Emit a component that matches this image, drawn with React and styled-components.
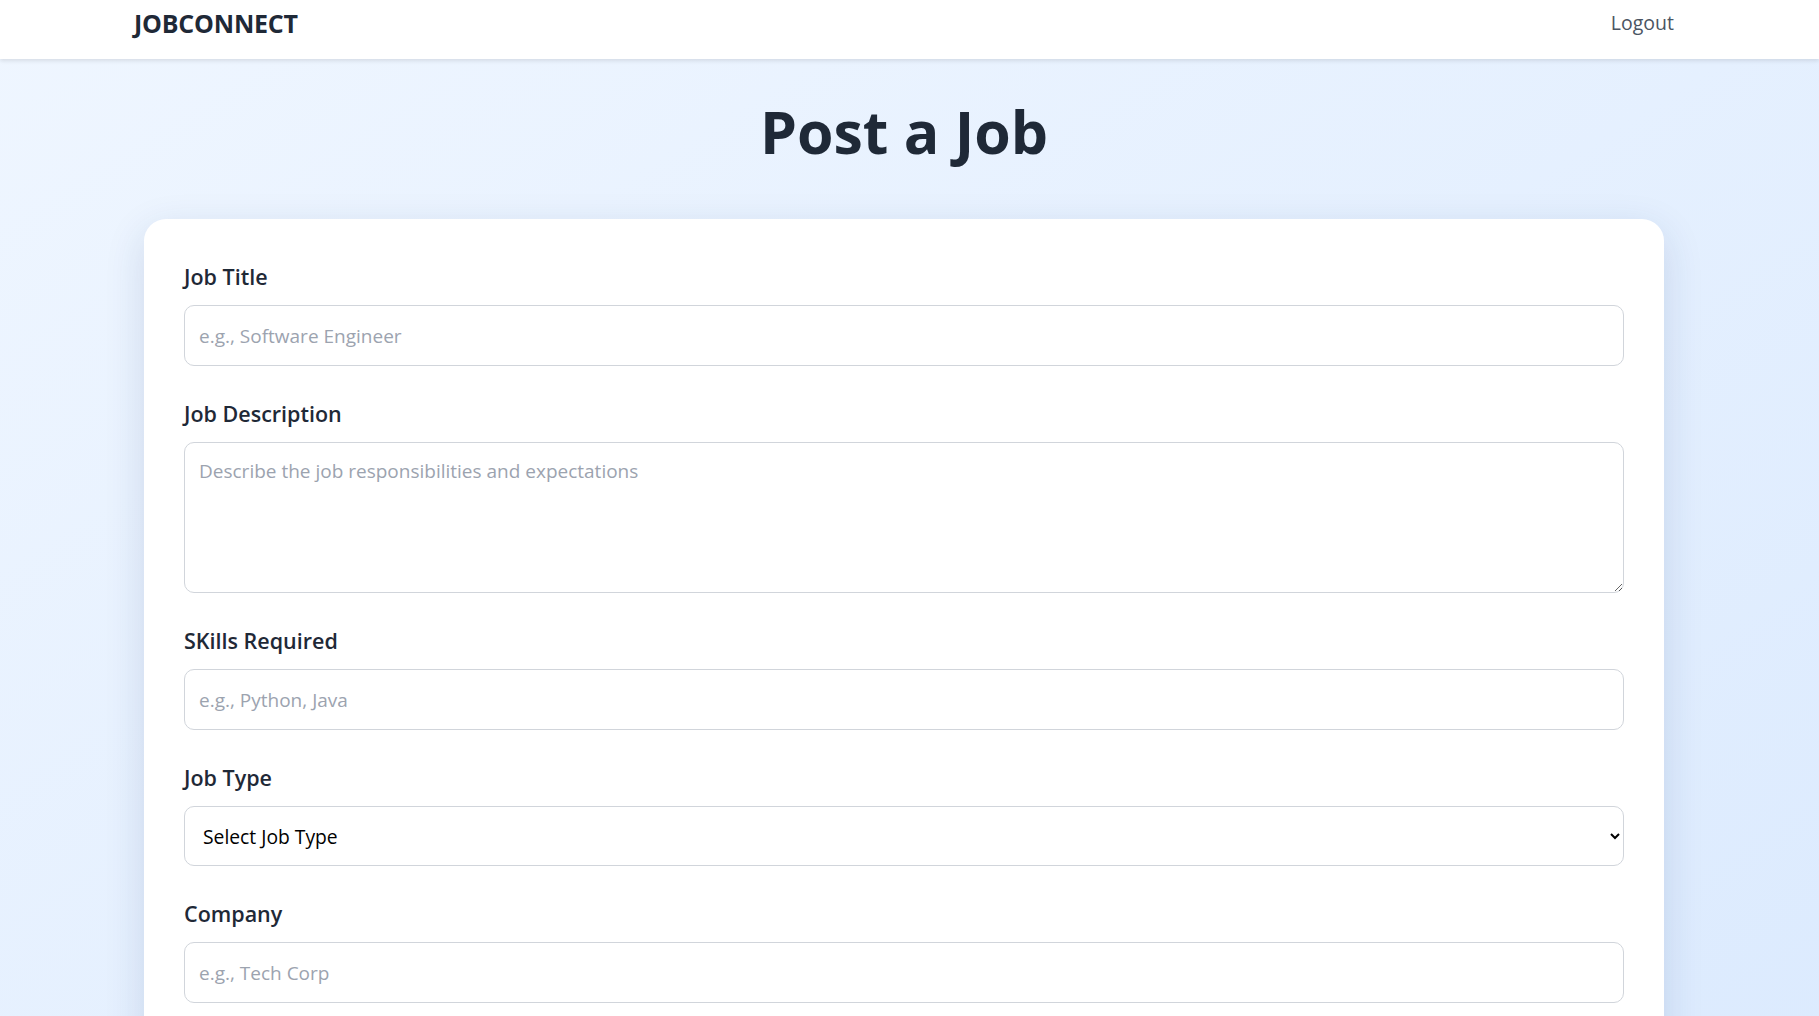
import styled, { createGlobalStyle } from 'styled-components';

const GlobalStyle = createGlobalStyle`
    html {
        scrollbar-width: none;
    }
    body {
        margin: 0;
        font-family: 'Open Sans', 'Noto Sans', sans-serif;
        color: #1f2937;
    }
    * {
        box-sizing: border-box;
    }
`

const fields = [
    { label: 'Job Title', placeholder: 'e.g., Software Engineer' },
    { label: 'Job Description', placeholder: 'Describe the job responsibilities and expectations', multiline: true },
    { label: 'SKills Required', placeholder: 'e.g., Python, Java' },
    { label: 'Job Type', select: true },
    { label: 'Company', placeholder: 'e.g., Tech Corp' },
]

export default function App() {
    return (
        <>
        <GlobalStyle />
        <Page>
        <Navbar>
        <Logo>JOBCONNECT</Logo>
        <LogoutLink href="#">Logout</LogoutLink>
        </Navbar>
        <Main>
        <Title>Post a Job</Title>
        <Card>
        {fields.map((f) => (
            <Field key={f.label}>
            <Label>{f.label}</Label>
            {f.multiline && <TextArea placeholder={f.placeholder} />}
            {f.select && (
                <Select defaultValue="">
                <option value="">Select Job Type</option>
                <option>Full-time</option>
                <option>Part-time</option>
                <option>Internship</option>
                </Select>
            )}
            {!f.multiline && !f.select && <Input placeholder={f.placeholder} />}
            </Field>
        ))}
        </Card>
        </Main>
        </Page>
        </>
    )
}

const Page = styled.div`
    min-height: 100vh;
    background: linear-gradient(to bottom right, #eff6ff, #dbeafe);
`

const Navbar = styled.nav`
    background: #ffffff;
    box-shadow: 0 2px 4px rgba(0, 0, 0, 0.1);
    height: 59px;
    display: flex;
    justify-content: space-between;
    align-items: flex-start;
    padding: 6px 145px 0 134px;
`

const Logo = styled.div`
    font-size: 25px;
    font-weight: 700;
    line-height: 34px;
    color: #1f2937;
    letter-spacing: -0.2px;
`

const LogoutLink = styled.a`
    font-size: 19.5px;
    line-height: 34px;
    color: #4b5563;
    text-decoration: none;
`

const Main = styled.main`
    padding: 36px 155px 40px 144px;
`

const Title = styled.h1`
    margin: 0 0 52px;
    text-align: center;
    font-size: 59px;
    line-height: 72px;
    font-weight: 700;
    color: #1f2937;
`

const Card = styled.section`
    background: #ffffff;
    border-radius: 22px;
    box-shadow: 0 12px 40px rgba(30, 58, 110, 0.14);
    padding: 41px 40px 60px;
`

const Field = styled.div`
    margin-bottom: 31px;
`

const Label = styled.label`
    display: block;
    font-size: 21.5px;
    font-weight: 600;
    line-height: 33px;
    margin-bottom: 12px;
    color: #1f2937;
`

const Input = styled.input`
    display: block;
    width: 100%;
    height: 61px;
    padding: 0 14px;
    border: 1px solid #d1d5db;
    border-radius: 10px;
    font-family: inherit;
    font-size: 19px;
    color: #111827;
    background: #ffffff;
    outline: none;

    &::placeholder {
        color: #9ca3af;
    }
`

const TextArea = styled.textarea`
    display: block;
    width: 100%;
    height: 151px;
    padding: 15px 14px;
    border: 1px solid #d1d5db;
    border-radius: 10px;
    font-family: inherit;
    font-size: 19px;
    line-height: 26px;
    color: #111827;
    outline: none;

    &::placeholder {
        color: #9ca3af;
    }
`

const Select = styled.select`
    display: block;
    width: 100%;
    height: 60px;
    padding: 0 14px;
    border: 1px solid #d1d5db;
    border-radius: 10px;
    font-family: inherit;
    font-size: 19.3px;
    color: #000000;
    background: #ffffff;
    outline: none;
`
